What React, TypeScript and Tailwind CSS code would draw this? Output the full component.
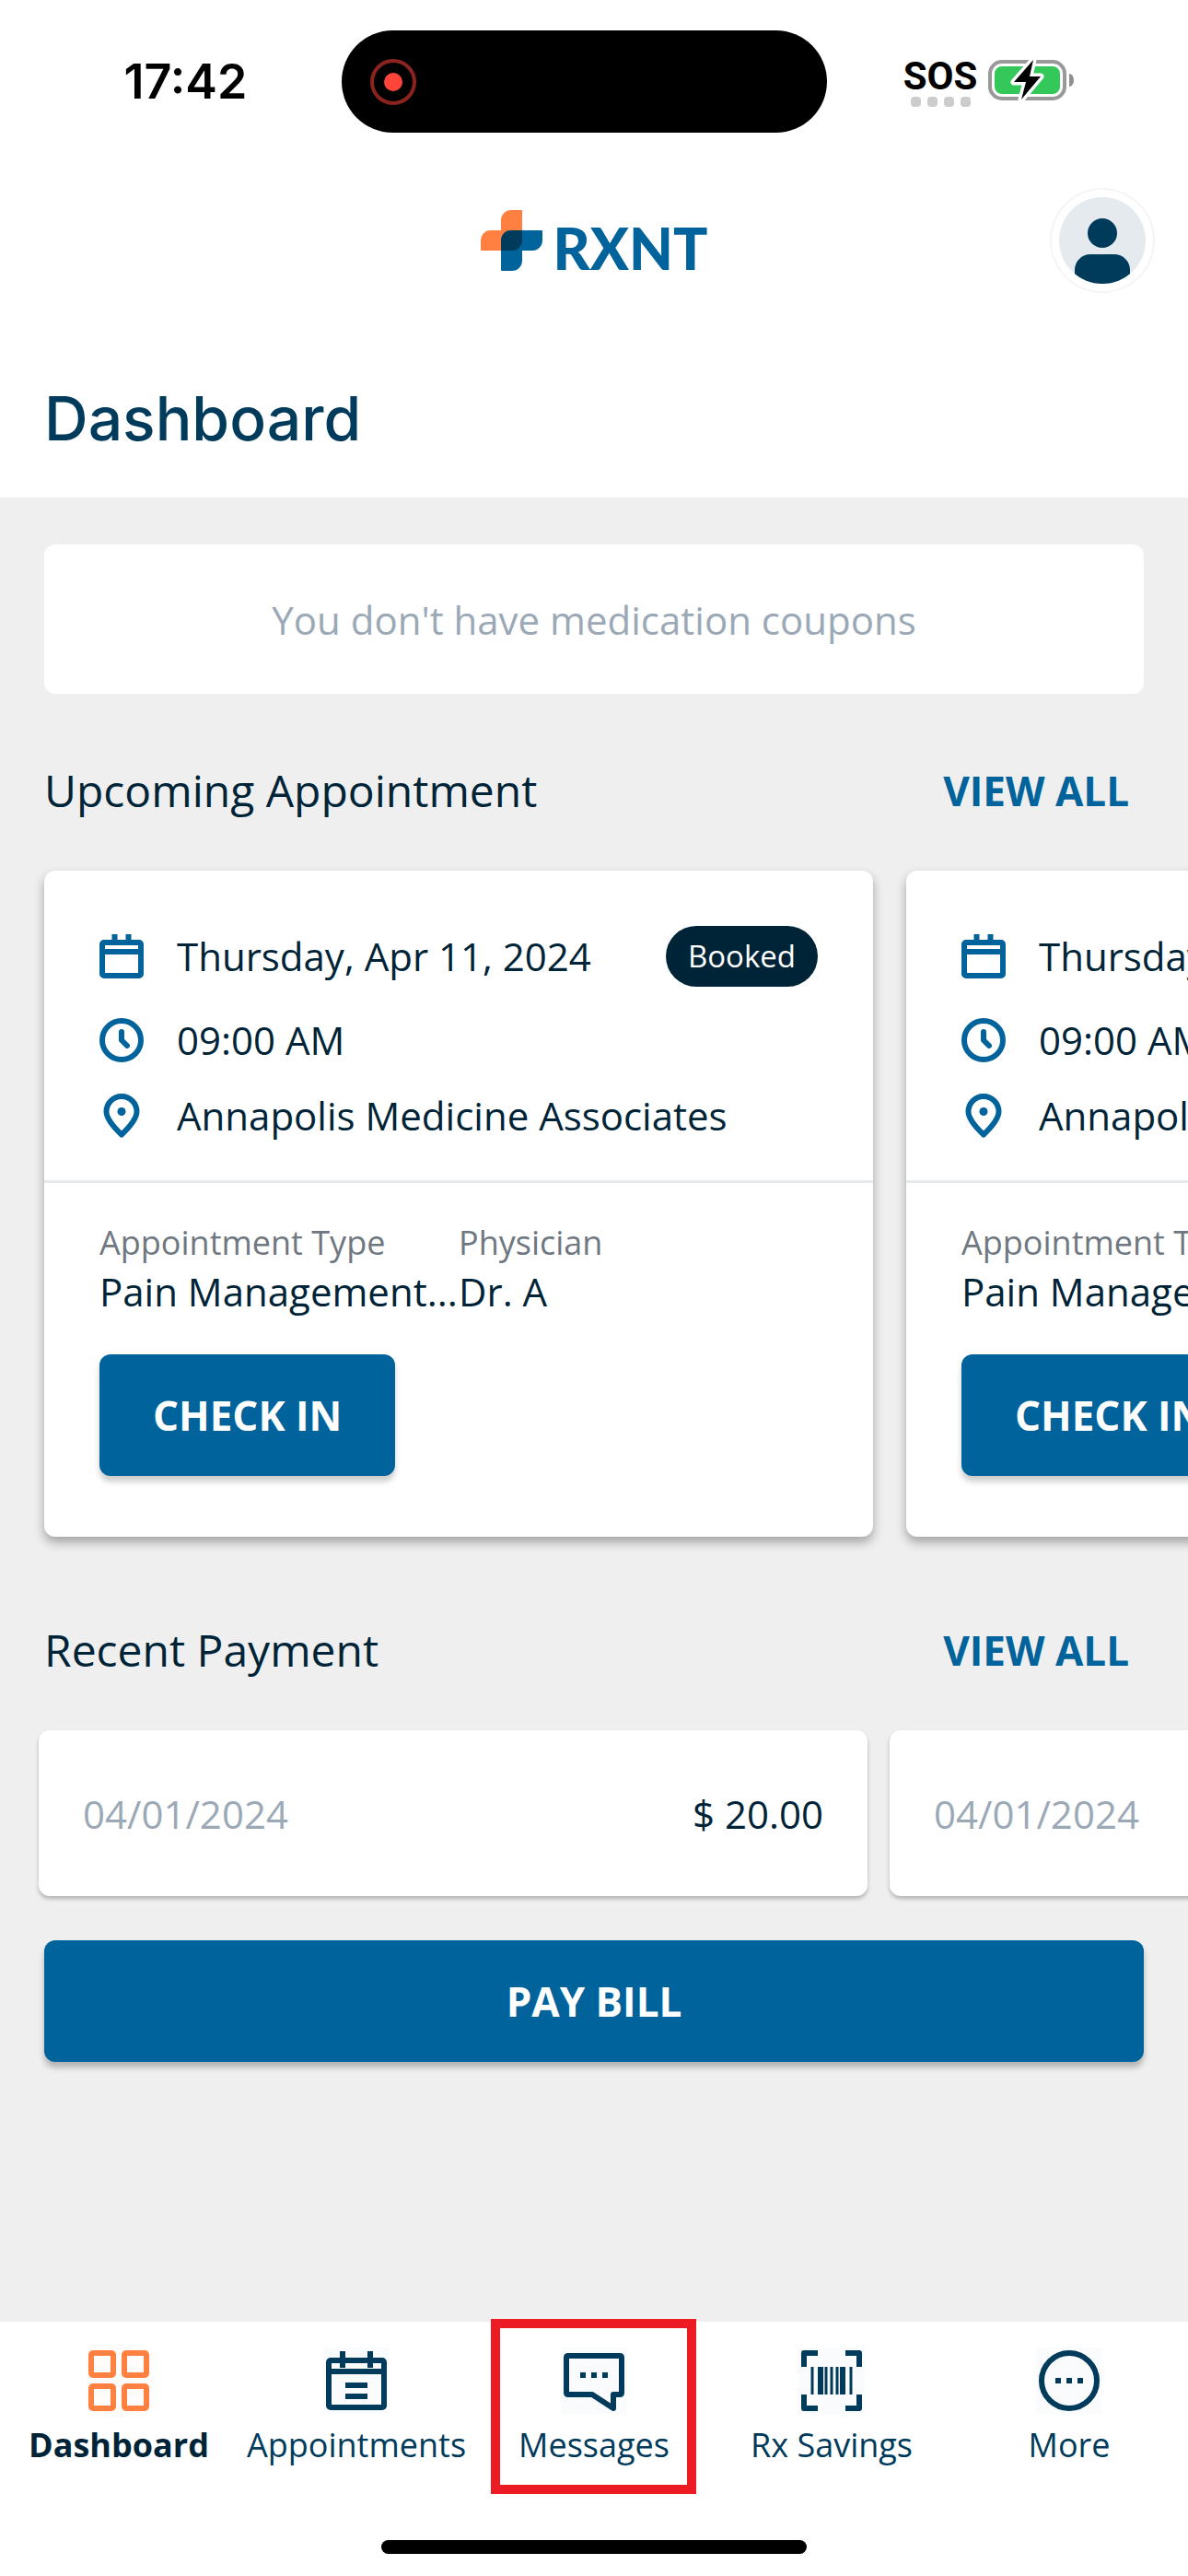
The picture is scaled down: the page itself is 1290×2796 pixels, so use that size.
import React, { ReactNode } from "react";

const StatusBar = () => (
  <div className="grid grid-cols-[371fr_527fr_392fr] items-center pt-[33px]">
    <time className="pl-8 text-center font-['Inter',sans-serif] text-[52px] leading-[64px] font-semibold text-black">
      17:42
    </time>
    <div className="flex h-[111px] items-center rounded-full bg-black pl-[31px]">
      <span className="flex size-[50px] items-center justify-center rounded-full border-4 border-[#8b231f]">
        <span className="size-5 rounded-full bg-[#ff453a]" />
      </span>
    </div>
    <div className="flex items-center justify-center gap-3 pr-10">
      <div className="flex flex-col items-center">
        <span className="font-['Roboto',sans-serif] text-[42px] leading-[44px] font-bold text-black">
          SOS
        </span>
        <div className="flex gap-[7px]">
          {[0, 1, 2, 3].map((dot) => (
            <span key={dot} className="size-[11px] rounded-[4px] bg-[#cccccc]" />
          ))}
        </div>
      </div>
      <svg width="94" height="48" viewBox="0 0 94 48" className="overflow-visible">
        <rect x="2" y="2" width="81" height="40" rx="13" fill="none" stroke="#999" strokeWidth="4" />
        <path d="M88 15a5 7 0 0 1 0 14z" fill="#8f8f8f" />
        <rect x="7" y="7" width="71" height="30" rx="8" fill="#34c759" />
        <path
          d="M49 0 28 24h13l-5 19 21-25H45z"
          fill="#000"
          stroke="#fff"
          strokeWidth="7"
          strokeLinejoin="round"
          paintOrder="stroke"
        />
      </svg>
    </div>
  </div>
);

const Logo = () => (
  <div className="flex items-center gap-3">
    <svg width="67" height="66" viewBox="0 0 67 66">
      <path d="M44 0H33a11 11 0 0 0-11 11v11H11A11 11 0 0 0 0 33v10q0 1 1 1h33a11 11 0 0 0 11-11V1q0-1-1-1z" fill="#ff8040" />
      <path d="M23 66h11a11 11 0 0 0 11-11V44h11a11 11 0 0 0 11-11V23q0-1-1-1H33a11 11 0 0 0-11 11v32q0 1 1 1z" fill="#00639b" />
      <path d="M33 22h12v11a11 11 0 0 1-11 11H22V33a11 11 0 0 1 11-11z" fill="#003b5c" />
    </svg>
    <span className="pt-4 font-['Lato',sans-serif] text-[62px] leading-[66px] font-black text-[#00639b]">
      RXNT
    </span>
  </div>
);

const Avatar = () => (
  <svg width="114" height="114" viewBox="0 0 114 114">
    <defs>
      <clipPath id="avatar">
        <circle cx="57" cy="57" r="47" />
      </clipPath>
    </defs>
    <circle cx="57" cy="57" r="56" fill="#fff" stroke="#f5f5f5" strokeWidth="2" />
    <g clipPath="url(#avatar)">
      <rect width="114" height="114" fill="#e5eaee" />
      <circle cx="57" cy="49" r="16" fill="#003b5c" />
      <rect x="27" y="72" width="60" height="50" rx="17" fill="#003b5c" />
    </g>
  </svg>
);

const CalendarIcon = () => (
  <svg width="48" height="48" viewBox="0 0 48 48" fill="none" stroke="currentColor" strokeWidth="6">
    <rect x="3" y="9" width="42" height="36" rx="2" />
    <path d="M3 19h42M16.5 0v8M31.5 0v8" />
  </svg>
);

const ClockIcon = () => (
  <svg width="48" height="48" viewBox="0 0 48 48" fill="none" stroke="currentColor" strokeWidth="6">
    <circle cx="24" cy="24" r="21" />
    <path d="M24 15v9l6 6" strokeLinecap="round" strokeLinejoin="round" />
  </svg>
);

const PinIcon = () => (
  <svg width="48" height="48" viewBox="0 0 48 48" fill="none" stroke="currentColor" strokeWidth="6">
    <path
      d="M24 44.5C14 35 7.5 27 7.5 19.5a16.5 16.5 0 0 1 33 0C40.5 27 34 35 24 44.5z"
      strokeLinejoin="round"
    />
    <circle cx="24" cy="19.5" r="4.5" fill="currentColor" stroke="none" />
  </svg>
);

const SectionHeader = ({ title }: { title: string }) => (
  <div className="flex items-center justify-between pr-4">
    <h2 className="text-[48px] leading-[66px] text-[#002437]">{title}</h2>
    <a href="#" className="text-[44px] leading-[64px] font-bold text-[#00639b]">
      VIEW ALL
    </a>
  </div>
);

const InfoRow = ({ icon, children }: { icon: ReactNode; children: ReactNode }) => (
  <div className="flex items-center gap-9 whitespace-nowrap text-[#00639b]">
    {icon}
    <span className="text-[42px] leading-[48px] text-[#002437]">{children}</span>
  </div>
);

const AppointmentCard = () => (
  <article className="w-[900px] max-w-[85%] shrink-0 rounded-xl bg-white shadow-[0_6px_12px_rgba(0,0,0,0.32)]">
    <div className="flex flex-col gap-[34px] border-b-[3px] border-[#e5eaee] px-[60px] pt-[60px] pb-[46px]">
      <div className="flex items-center justify-between">
        <InfoRow icon={<CalendarIcon />}>Thursday, Apr 11, 2024</InfoRow>
        <span className="rounded-full bg-[#002437] px-6 text-[33px] leading-[66px] text-white">
          Booked
        </span>
      </div>
      <InfoRow icon={<ClockIcon />}>09:00 AM</InfoRow>
      <InfoRow icon={<PinIcon />}>Annapolis Medicine Associates</InfoRow>
    </div>
    <div className="px-[60px] pt-10 pb-[66px]">
      <dl className="grid grid-cols-2 whitespace-nowrap">
        <div>
          <dt className="text-[36px] leading-[50px] text-[#6f7780]">Appointment Type</dt>
          <dd className="text-[42px] leading-[56px] text-[#002437]">Pain Management...</dd>
        </div>
        <div>
          <dt className="text-[36px] leading-[50px] text-[#6f7780]">Physician</dt>
          <dd className="text-[42px] leading-[56px] text-[#002437]">Dr. A</dd>
        </div>
      </dl>
      <button className="mt-10 h-[132px] rounded-xl bg-[#00639b] px-[58px] text-[44px] font-bold text-white shadow-[0_6px_6px_rgba(0,0,0,0.2)]">
        CHECK IN
      </button>
    </div>
  </article>
);

const PaymentCard = () => (
  <article className="flex h-[180px] w-[900px] max-w-[85%] shrink-0 items-center justify-between rounded-xl bg-white px-12 text-[42px] shadow-[0_3px_4px_rgba(0,0,0,0.25)]">
    <time className="text-[#9ba9b7]">04/01/2024</time>
    <span className="text-[#002437]">$ 20.00</span>
  </article>
);

const dotRow = (y: number) =>
  [21, 33, 45].map((x) => (
    <rect key={x} x={x} y={y} width="6" height="6" fill="currentColor" stroke="none" />
  ));

const navItems = [
  {
    label: "Dashboard",
    active: true,
    icon: (
      <>
        <rect x="6" y="6" width="24" height="24" rx="2" />
        <rect x="42" y="6" width="24" height="24" rx="2" />
        <rect x="6" y="42" width="24" height="24" rx="2" />
        <rect x="42" y="42" width="24" height="24" rx="2" />
      </>
    ),
  },
  {
    label: "Appointments",
    icon: (
      <>
        <rect x="6" y="14" width="60" height="51" rx="2" />
        <path d="M6 26h60M21 4v18M51 4v18M24 41h24M24 53h24" />
      </>
    ),
  },
  {
    label: "Messages",
    highlighted: true,
    icon: (
      <>
        <path
          d="M8 9h56q2 0 2 2v38q0 2-2 2h-7v15L34 51H8q-2 0-2-2V11q0-2 2-2z"
          strokeLinejoin="round"
        />
        {dotRow(27)}
      </>
    ),
  },
  {
    label: "Rx Savings",
    icon: (
      <>
        <path d="M21 6H6v15M51 6h15v15M21 66H6V51M51 66h15V51" strokeLinejoin="round" />
        <path d="M24 21v30M48 21v30" />
        <path d="M15 21v30M30 21v30M36 21v30M42 21v30M57 21v30" strokeWidth="3" />
      </>
    ),
  },
  {
    label: "More",
    icon: (
      <>
        <circle cx="36" cy="36" r="30" />
        {dotRow(33)}
      </>
    ),
  },
];

const BottomNav = () => (
  <footer className="bg-white pb-6">
    <nav className="grid grid-cols-5">
      {navItems.map(({ label, icon, active, highlighted }) => (
        <a key={label} href="#" className="relative flex flex-col items-center gap-[10px] pt-7">
          <svg
            width="72"
            height="72"
            viewBox="0 0 72 72"
            fill="none"
            stroke="currentColor"
            strokeWidth="6"
            className={active ? "bg-[#fffcfb] text-[#ff8040]" : "bg-[#fafbfc] text-[#003b5c]"}
          >
            {icon}
          </svg>
          <span
            className={`text-[36px] leading-[48px] ${
              active ? "font-bold text-[#002437]" : "text-[#003b5c]"
            }`}
          >
            {label}
          </span>
          {highlighted && (
            <span className="absolute -top-[3px] right-[18px] left-[17px] h-[190px] border-[10px] border-[#ed1c24]" />
          )}
        </a>
      ))}
    </nav>
    <div className="mx-auto mt-[79px] h-[15px] w-[462px] rounded-full bg-black" />
  </footer>
);

const App = () => {
  return (
    <div className="flex min-h-screen flex-col overflow-x-hidden bg-[#efefef] font-['Open_Sans',sans-serif]">
      <header className="bg-white pb-[46px]">
        <StatusBar />
        <div className="mt-[60px] grid grid-cols-3 items-center px-9">
          <div className="col-start-2 flex justify-center">
            <Logo />
          </div>
          <button aria-label="Profile" className="justify-self-end rounded-full">
            <Avatar />
          </button>
        </div>
        <h1 className="mt-24 px-12 font-['Inter',sans-serif] text-[66px] leading-[80px] font-medium text-[#003b5c]">
          Dashboard
        </h1>
      </header>

      <main className="flex-1 px-12 pt-[51px] pb-12">
        <p className="flex h-[162px] items-center justify-center rounded-xl bg-white text-[42px] text-[#9ba9b7]">
          You don't have medication coupons
        </p>

        <section className="mt-[72px]">
          <SectionHeader title="Upcoming Appointment" />
          <div className="-mx-12 -mb-6 flex gap-9 overflow-x-auto px-12 pt-[54px] pb-6 [scrollbar-width:none]">
            <AppointmentCard />
            <AppointmentCard />
          </div>
        </section>

        <section className="mt-[90px]">
          <SectionHeader title="Recent Payment" />
          <div className="-mx-12 -mb-6 flex gap-6 overflow-x-auto px-[42px] pt-[54px] pb-6 [scrollbar-width:none]">
            <PaymentCard />
            <PaymentCard />
          </div>
        </section>

        <button className="mt-12 h-[132px] w-full rounded-xl bg-[#00639b] text-[44px] font-bold text-white shadow-[0_6px_6px_rgba(0,0,0,0.25)]">
          PAY BILL
        </button>
      </main>

      <BottomNav />
    </div>
  );
};

export default App;
